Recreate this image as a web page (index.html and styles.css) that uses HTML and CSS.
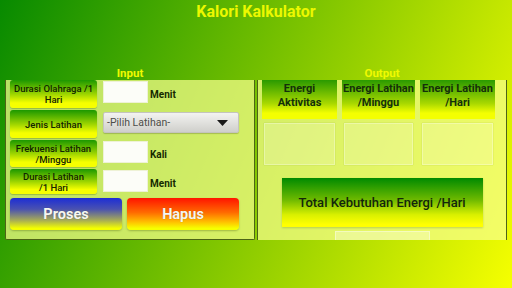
FILE: index.html
```html
<!DOCTYPE html>
<html lang="id">
    <head>
        <meta charset="UTF-8" />
        <meta name="viewport" content="width=device-width, initial-scale=1.0" />
        <title>Kalori Kalkulator</title>
        <link rel="stylesheet" href="styles.css">
    </head>
    <body>
        <main class="screen">
            <h1 class="title">Kalori Kalkulator</h1>

            <div class="columns">
                <section class="column">
                    <h2 class="column-title">Input</h2>
                    <div class="panel input-panel">
                        <div class="form-row row-1">
                            <div class="field-label">Durasi Olahraga /1 Hari</div>
                            <div class="field">
                                <span class="text-box"></span>
                                <span class="unit">Menit</span>
                            </div>
                        </div>
                        <div class="form-row row-2">
                            <div class="field-label">Jenis Latihan</div>
                            <div class="field">
                                <div class="select">
                                    <span>-Pilih Latihan-</span>
                                    <svg width="11" height="6" viewBox="0 0 11 6">
                                        <polygon points="0,0 11,0 5.5,6" fill="#1a1a1a" />
                                    </svg>
                                </div>
                            </div>
                        </div>
                        <div class="form-row row-3">
                            <div class="field-label">Frekuensi Latihan /Minggu</div>
                            <div class="field">
                                <span class="text-box"></span>
                                <span class="unit">Kali</span>
                            </div>
                        </div>
                        <div class="form-row row-4">
                            <div class="field-label">Durasi Latihan<br>/1 Hari</div>
                            <div class="field">
                                <span class="text-box"></span>
                                <span class="unit">Menit</span>
                            </div>
                        </div>
                        <div class="actions">
                            <button class="btn btn-proses">Proses</button>
                            <button class="btn btn-hapus">Hapus</button>
                        </div>
                    </div>
                </section>

                <section class="column">
                    <h2 class="column-title">Output</h2>
                    <div class="panel output-panel">
                        <div class="result-grid">
                            <div class="result-head">Energi<br>Aktivitas</div>
                            <div class="result-head">Energi Latihan<br>/Minggu</div>
                            <div class="result-head">Energi Latihan<br>/Hari</div>
                            <div class="result-value"></div>
                            <div class="result-value"></div>
                            <div class="result-value"></div>
                        </div>
                        <div class="total">Total Kebutuhan Energi /Hari</div>
                        <div class="total-value"></div>
                    </div>
                </section>
            </div>
        </main>
    </body>
</html>
```

FILE: styles.css
```css
*,
*::before,
*::after {
    padding: 0;
    margin: 0;
    box-sizing: border-box;
}

body {
    width: 512px;
    height: 288px;
    overflow: hidden;
    background: linear-gradient(114deg, #078a00 0%, #f6ff00 100%);
    font-family: Roboto, "Noto Sans", sans-serif;
    color: #162a00;
}

.screen {
    display: flex;
    flex-direction: column;
}

.title {
    text-align: center;
    font-size: 16px;
    font-weight: 700;
    line-height: 20px;
    padding-top: 2px;
    color: #ecf800;
}

.columns {
    display: flex;
    gap: 2px;
    padding: 0 5px;
    margin-top: 44px;
    align-items: flex-start;
}

.column {
    width: 250px;
    display: flex;
    flex-direction: column;
}

.column-title {
    text-align: center;
    font-size: 11.5px;
    font-weight: 700;
    line-height: 14px;
    color: #f0fa00;
}

.panel {
    background-color: rgba(246, 255, 140, 0.72);
    border: 1px solid #4d6416;
    border-top: none;
}

/* input */

.input-panel {
    display: flex;
    flex-direction: column;
    gap: 2px;
    padding: 0 4px 9px;
    border-radius: 0 0 2px 2px;
}

.form-row {
    display: flex;
    gap: 6px;
    height: 28px;

    &.row-3 {
        height: 27px;
    }

    &.row-4 {
        height: 25px;
    }
}

.field-label {
    width: 87px;
    display: flex;
    align-items: center;
    justify-content: center;
    text-align: center;
    font-size: 9.5px;
    font-weight: 500;
    line-height: 11px;
    color: #122400;
    border-radius: 3px;
    padding: 0 2px;
    background: linear-gradient(#1c9800 0%, #9cd400 50%, #f6ff00 82%);
    box-shadow: 0 1px 1px rgba(60, 90, 0, 0.3);
}

.field {
    display: flex;
    align-items: flex-start;
    padding-top: 1px;
}

.row-2 .field {
    padding-top: 2px;
}

.text-box {
    width: 45px;
    height: 22px;
    background-color: #fcfdf8;
    border: 1px solid #eef2d6;
}

.unit {
    margin-left: 2px;
    font-size: 10px;
    font-weight: 700;
    line-height: 22px;
    padding-top: 3px;
}

.select {
    width: 136px;
    height: 21px;
    display: flex;
    align-items: center;
    justify-content: space-between;
    padding: 0 10px 0 3px;
    border-radius: 2px;
    border: 1px solid #c4c4be;
    background: linear-gradient(#f3f3f1, #cfcfcb);
    box-shadow: 0 1px 1px rgba(0, 0, 0, 0.2);
    font-size: 10.5px;
    color: #4e4e4a;
}

.actions {
    display: flex;
    gap: 5px;
    margin-top: 2px;
}

.btn {
    width: 112px;
    height: 32px;
    border: none;
    border-radius: 4px;
    font-family: Roboto, "Noto Sans", sans-serif;
    font-size: 14.5px;
    font-weight: 700;
    color: #f6f6f0;
    text-shadow: 0 0 1px rgba(0, 0, 0, 0.3);
    box-shadow: 0 1px 2px rgba(60, 80, 0, 0.35);

    &.btn-proses {
        background: linear-gradient(#1c2dd6 0%, #4a52b0 35%, #a8ad55 70%, #f4ff00 95%);
    }

    &.btn-hapus {
        background: linear-gradient(#ff1400 0%, #ff6a00 45%, #ffc000 75%, #f6ff00 95%);
    }
}

/* output */

.output-panel {
    height: 160px;
    overflow: hidden;
    border-bottom: none;
}

.result-grid {
    display: grid;
    grid-template-columns: 75px 73px 75px;
    column-gap: 5px;
    row-gap: 4px;
    margin-left: 4px;
}

.result-head {
    height: 39px;
    display: flex;
    align-items: flex-start;
    justify-content: center;
    padding-top: 2px;
    text-align: center;
    font-size: 11px;
    font-weight: 700;
    line-height: 14px;
    color: #14300a;
    background: linear-gradient(#2a9a00 0%, #a8d800 60%, #f4ff00 85%);
}

.result-value {
    height: 42px;
    margin: 0 2px;
    background-color: rgba(255, 255, 255, 0.18);
    border: 1px solid rgba(255, 255, 255, 0.3);
    box-shadow: 0 0 1px rgba(90, 120, 20, 0.35);
}

.total {
    width: 201px;
    height: 49px;
    margin: 13px auto 0;
    display: flex;
    align-items: center;
    justify-content: center;
    font-size: 13px;
    font-weight: 500;
    color: #14260a;
    background: linear-gradient(#008a00 0%, #6fba00 45%, #d9f000 75%, #ffff00 95%);
    box-shadow: 0 1px 2px rgba(60, 90, 0, 0.25);
}

.total-value {
    width: 95px;
    height: 20px;
    margin: 4px auto 0;
    background-color: rgba(255, 255, 255, 0.3);
    border: 1px solid rgba(255, 255, 255, 0.4);
}
```
